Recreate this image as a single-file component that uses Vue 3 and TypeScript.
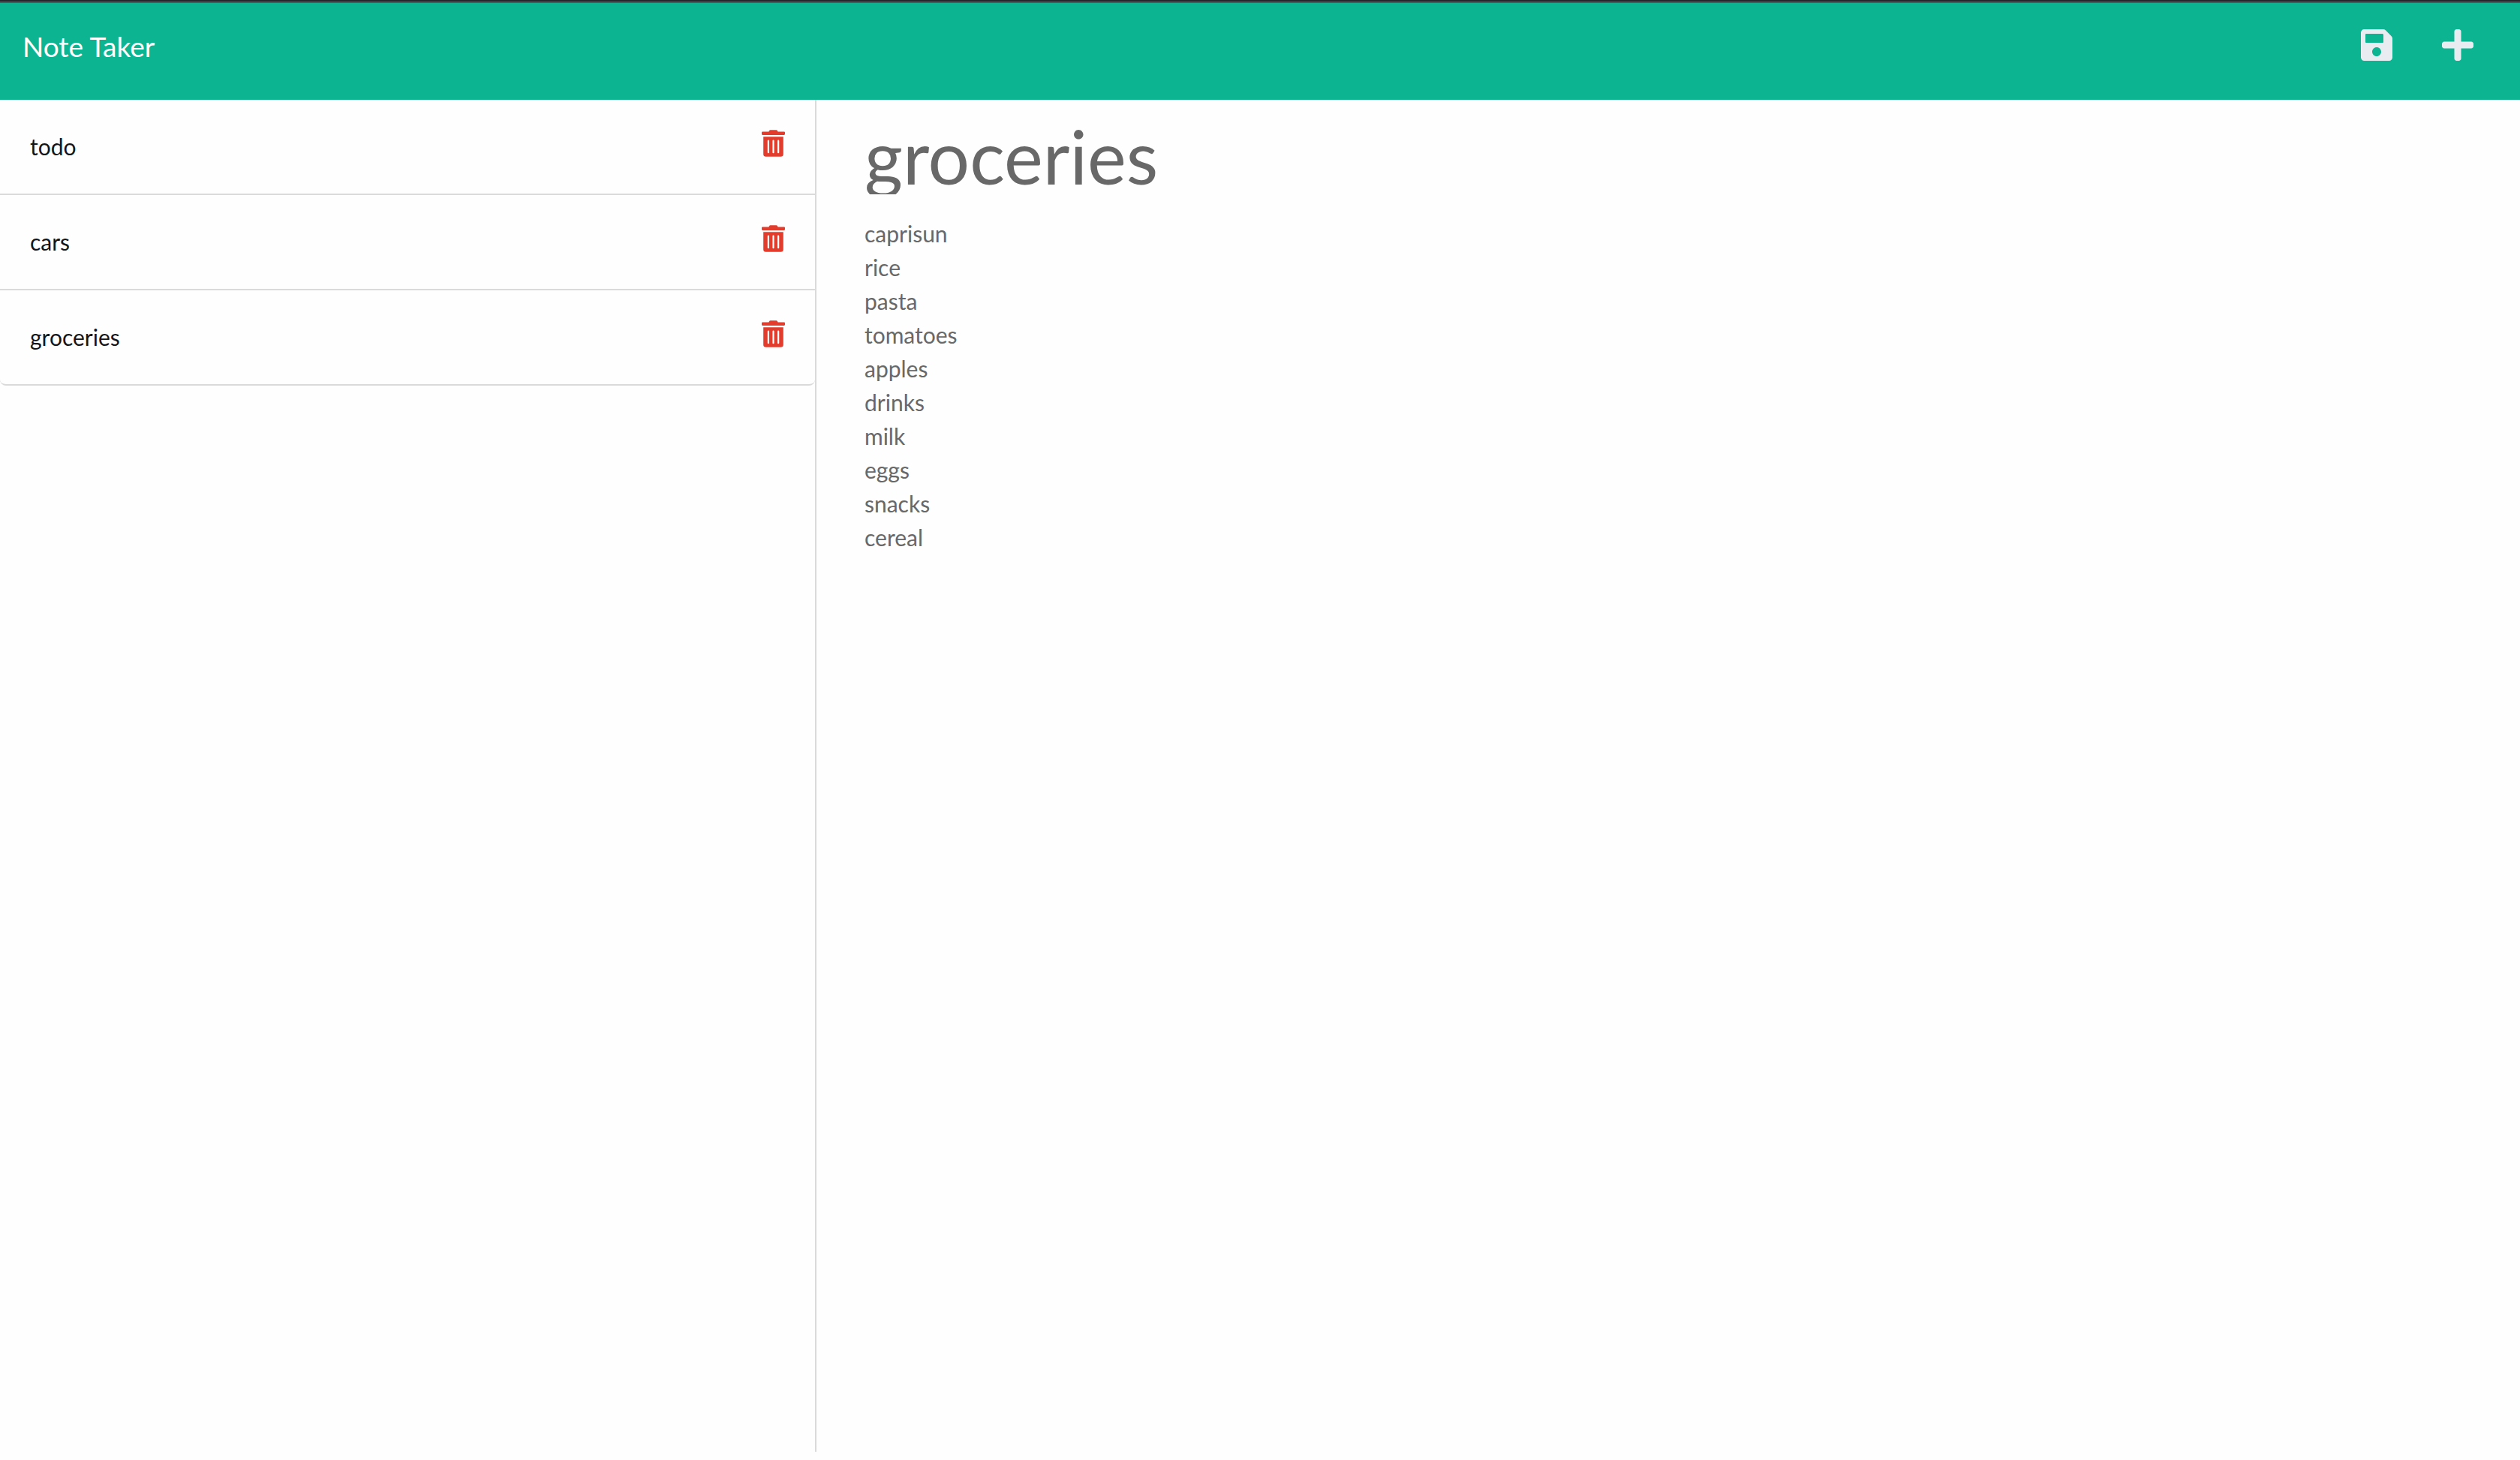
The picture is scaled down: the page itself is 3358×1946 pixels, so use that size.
<script setup lang="ts">
import { ref } from 'vue'

interface Note {
  title: string
  text: string
}

const notes = ref<Note[]>([
  { title: 'todo', text: '' },
  { title: 'cars', text: '' },
  {
    title: 'groceries',
    text: [
      'caprisun',
      'rice',
      'pasta',
      'tomatoes',
      'apples',
      'drinks',
      'milk',
      'eggs',
      'snacks',
      'cereal',
    ].join('\n'),
  },
])

const title = ref(notes.value[2].title)
const text = ref(notes.value[2].text)

function openNote(note: Note) {
  title.value = note.title
  text.value = note.text
}

function newNote() {
  title.value = ''
  text.value = ''
}

function saveNote() {
  notes.value.push({ title: title.value, text: text.value })
}

function removeNote(index: number) {
  notes.value.splice(index, 1)
}
</script>

<template>
  <div class="app">
    <header class="navbar">
      <a class="brand" href="#">Note Taker</a>
      <div class="actions">
        <button class="icon-button" type="button" aria-label="Save note" @click="saveNote">
          <svg class="icon" viewBox="0 0 448 512" aria-hidden="true">
            <path
              d="M433.941 129.941l-83.882-83.882A48 48 0 0 0 316.118 32H48C21.49 32 0 53.49 0 80v352c0 26.51 21.49 48 48 48h352c26.51 0 48-21.49 48-48V163.882a48 48 0 0 0-14.059-33.941zM224 416c-35.346 0-64-28.654-64-64 0-35.346 28.654-64 64-64s64 28.654 64 64c0 35.346-28.654 64-64 64zm96-304.52V212c0 6.627-5.373 12-12 12H76c-6.627 0-12-5.373-12-12V108c0-6.627 5.373-12 12-12h228.52c3.183 0 6.235 1.264 8.485 3.515l3.48 3.48A11.996 11.996 0 0 1 320 111.48z"
            />
          </svg>
        </button>
        <button class="icon-button" type="button" aria-label="New note" @click="newNote">
          <svg class="icon" viewBox="0 0 448 512" aria-hidden="true">
            <path
              d="M416 208H272V64c0-17.67-14.33-32-32-32h-32c-17.67 0-32 14.33-32 32v144H32c-17.67 0-32 14.33-32 32v32c0 17.67 14.33 32 32 32h144v144c0 17.67 14.33 32 32 32h32c17.67 0 32-14.33 32-32V304h144c17.67 0 32-14.33 32-32v-32c0-17.67-14.33-32-32-32z"
            />
          </svg>
        </button>
      </div>
    </header>

    <div class="content">
      <aside class="sidebar">
        <ul class="note-list">
          <li v-for="(note, index) in notes" :key="index" class="note-item">
            <button class="note-title" type="button" @click="openNote(note)">{{ note.title }}</button>
            <button
              class="delete-button"
              type="button"
              :aria-label="`Delete ${note.title}`"
              @click="removeNote(index)"
            >
              <svg class="trash" viewBox="0 0 448 512" aria-hidden="true">
                <path
                  d="M32 464a48 48 0 0 0 48 48h288a48 48 0 0 0 48-48V128H32zm272-256a16 16 0 0 1 32 0v224a16 16 0 0 1-32 0zm-96 0a16 16 0 0 1 32 0v224a16 16 0 0 1-32 0zm-96 0a16 16 0 0 1 32 0v224a16 16 0 0 1-32 0zM432 32H312l-9.4-18.7A24 24 0 0 0 281.1 0H166.8a23.72 23.72 0 0 0-21.4 13.3L136 32H16A16 16 0 0 0 0 48v32a16 16 0 0 0 16 16h416a16 16 0 0 0 16-16V48a16 16 0 0 0-16-16z"
                />
              </svg>
            </button>
          </li>
        </ul>
      </aside>

      <main class="editor">
        <input v-model="title" class="editor-title" type="text" aria-label="Note title" />
        <textarea v-model="text" class="editor-text" rows="20" aria-label="Note text"></textarea>
      </main>
    </div>
  </div>
</template>

<style>
body {
  margin: 0;
  background: #fefefe;
}
</style>

<style scoped>
.app {
  font-family: Lato, 'Open Sans', sans-serif;
  font-size: 30px;
  line-height: 45px;
  border-top: 2px solid #25282c;
}

.navbar {
  box-sizing: border-box;
  display: flex;
  justify-content: space-between;
  align-items: flex-start;
  min-height: 131px;
  padding: 32px 62px 0 30px;
  border-top: 2px solid #53575b;
  background: #0db492;
}

.brand {
  color: #fff;
  font-size: 37px;
  line-height: 52px;
  text-decoration: none;
  white-space: nowrap;
}

.actions {
  display: flex;
  gap: 66px;
}

button {
  padding: 0;
  border: 0;
  background: none;
  font: inherit;
  cursor: pointer;
}

.icon {
  display: block;
  width: 42px;
  height: 48px;
  fill: #e9edf1;
}

.content {
  display: flex;
  align-items: flex-start;
}

.sidebar {
  box-sizing: border-box;
  flex: 0 0 32.4%;
  min-height: calc(100vh - 144px);
  border-right: 2px solid #dadada;
}

.note-list {
  margin: 0;
  padding: 0;
  list-style: none;
}

.note-item {
  display: flex;
  align-items: flex-start;
  padding: 40px;
  border-bottom: 2px solid #dadada;
}

.note-item:last-child {
  border-bottom-left-radius: 8px;
  border-bottom-right-radius: 8px;
}

.note-title {
  flex: 1;
  color: #12161b;
  text-align: left;
}

.trash {
  display: block;
  width: 31px;
  height: 36px;
  fill: #e43c2c;
}

.editor {
  display: flex;
  flex: 1;
  flex-direction: column;
  gap: 30px;
  min-width: 0;
  padding: 24px 60px 0 64px;
}

.editor-title,
.editor-text {
  width: 100%;
  padding: 0;
  border: 0;
  outline: 0;
  background: transparent;
  color: #686868;
  font-family: inherit;
}

.editor-title {
  height: 102px;
  font-size: 98px;
}

.editor-text {
  display: block;
  font-size: 30px;
  line-height: 45px;
  resize: none;
}
</style>
